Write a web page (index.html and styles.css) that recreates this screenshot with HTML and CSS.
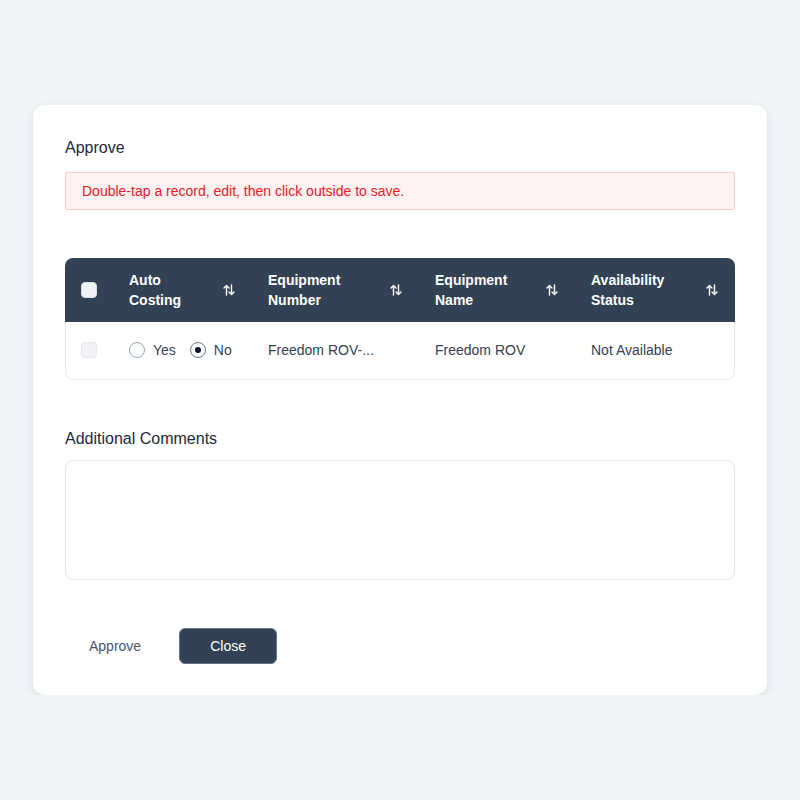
FILE: index.html
```html
<!DOCTYPE html>
<html>
<head>
<meta charset="utf-8">
<link rel="stylesheet" href="styles.css">
</head>
<body>
<div class="card">
  <div class="title">Approve</div>
  <div class="alert">Double-tap a record, edit, then click outside to save.</div>
  <div class="table">
    <div class="thead">
      <div class="cell c1"><span class="cb cb-head"></span></div>
      <div class="cell c2"><span class="hl">Auto<br>Costing</span><svg class="sort" viewBox="0 0 12 12"><path d="M3.5 11V1.5M1 4L3.5 1.5L6 4M8.5 1V10.5M6 8L8.5 10.5L11 8"/></svg></div>
      <div class="cell c3"><span class="hl">Equipment<br>Number</span><svg class="sort" viewBox="0 0 12 12"><path d="M3.5 11V1.5M1 4L3.5 1.5L6 4M8.5 1V10.5M6 8L8.5 10.5L11 8"/></svg></div>
      <div class="cell c4"><span class="hl">Equipment<br>Name</span><svg class="sort" viewBox="0 0 12 12"><path d="M3.5 11V1.5M1 4L3.5 1.5L6 4M8.5 1V10.5M6 8L8.5 10.5L11 8"/></svg></div>
      <div class="cell c5"><span class="hl">Availability<br>Status</span><svg class="sort" viewBox="0 0 12 12"><path d="M3.5 11V1.5M1 4L3.5 1.5L6 4M8.5 1V10.5M6 8L8.5 10.5L11 8"/></svg></div>
    </div>
    <div class="trow">
      <div class="cell c1"><span class="cb cb-row"></span></div>
      <div class="cell c2">
        <span class="radio"></span><span class="rlabel">Yes</span>
        <span class="radio on"></span><span class="rlabel">No</span>
      </div>
      <div class="cell c3">Freedom ROV-...</div>
      <div class="cell c4">Freedom ROV</div>
      <div class="cell c5">Not Available</div>
    </div>
  </div>
  <div class="label">Additional Comments</div>
  <div class="textarea"></div>
  <div class="actions">
    <button class="btn btn-text">Approve</button>
    <button class="btn btn-dark">Close</button>
  </div>
</div>
</body>
</html>
```
FILE: styles.css
```css
html, body {
  margin: 0;
  padding: 0;
  background: #f1f4f9;
  font-family: "Liberation Sans", Arial, sans-serif;
}
body {
  padding: 105px 33px 0 33px;
}
.card {
  width: 734px;
  box-sizing: border-box;
  background: #ffffff;
  border-radius: 12px;
  box-shadow: 0 3px 10px rgba(15, 23, 42, 0.10);
  padding: 32px 32px 31px 32px;
}
.title {
  font-size: 16px;
  line-height: 22px;
  color: #1e293b;
  margin-bottom: 13px;
}
.alert {
  background: #fef2f2;
  border: 1px solid #fecaca;
  border-radius: 2px;
  color: #e11d27;
  font-size: 14px;
  line-height: 20px;
  padding: 8px 16px;
  margin-bottom: 48px;
}
.table {
  border-radius: 8px;
  overflow: hidden;
}
.thead, .trow {
  display: flex;
}
.thead {
  background: #334155;
  height: 64px;
  color: #ffffff;
  font-weight: bold;
  font-size: 14px;
  line-height: 20px;
}
.trow {
  height: 58px;
  box-sizing: border-box;
  border: 1px solid #e8ecf1;
  border-top: none;
  border-radius: 0 0 8px 8px;
  padding-bottom: 2px;
  font-size: 14px;
  color: #334155;
}
.cell {
  display: flex;
  align-items: center;
  box-sizing: border-box;
  padding: 0 16px;
}
.trow .c1 { width: 47px; padding-left: 15px; }
.c1 { width: 48px; }
.c2 { width: 139px; }
.c3 { width: 167px; }
.c4 { width: 156px; }
.c5 { flex: 1; }
.thead .cell { justify-content: space-between; }
.thead .c1 { justify-content: flex-start; }
.hl { display: block; }
.sort {
  flex-shrink: 0;
  width: 12px;
  height: 12px;
  fill: none;
  stroke: #ffffff;
  stroke-width: 1.4;
  stroke-linecap: round;
  stroke-linejoin: round;
  margin-right: 1px;
}
.cb {
  display: block;
  flex-shrink: 0;
  width: 16px;
  height: 16px;
  box-sizing: border-box;
  border-radius: 4px;
}
.cb-head {
  background: #f1f3f6;
  border: 1px solid #d8dee6;
}
.cb-row {
  background: #f1f3f6;
  border: 1px solid #e4e8ee;
}
.radio {
  display: block;
  flex-shrink: 0;
  width: 16px;
  height: 16px;
  box-sizing: border-box;
  border-radius: 50%;
  border: 1px solid #94a3b8;
  background: #fff;
  position: relative;
}
.radio.on {
  border-color: #64748b;
}
.radio.on::after {
  content: "";
  position: absolute;
  left: 4px;
  top: 4px;
  width: 6px;
  height: 6px;
  border-radius: 50%;
  background: #0b1633;
}
.rlabel {
  margin-left: 8px;
  margin-right: 14px;
  white-space: nowrap;
}
.label {
  font-size: 16px;
  line-height: 22px;
  color: #1e293b;
  margin-top: 48px;
  margin-bottom: 10px;
}
.textarea {
  height: 120px;
  box-sizing: border-box;
  border: 1px solid #e2e6ec;
  border-radius: 8px;
}
.actions {
  display: flex;
  align-items: center;
  gap: 14px;
  margin-top: 48px;
}
.btn {
  font-family: "Liberation Sans", Arial, sans-serif;
  font-size: 14px;
  height: 36px;
  border-radius: 6px;
  border: none;
  cursor: pointer;
}
.btn-text {
  background: transparent;
  color: #475569;
  padding: 0 24px;
}
.btn-dark {
  background: #334155;
  color: #ffffff;
  padding: 0 30px;
  border: 1px solid #64748b;
}
```
